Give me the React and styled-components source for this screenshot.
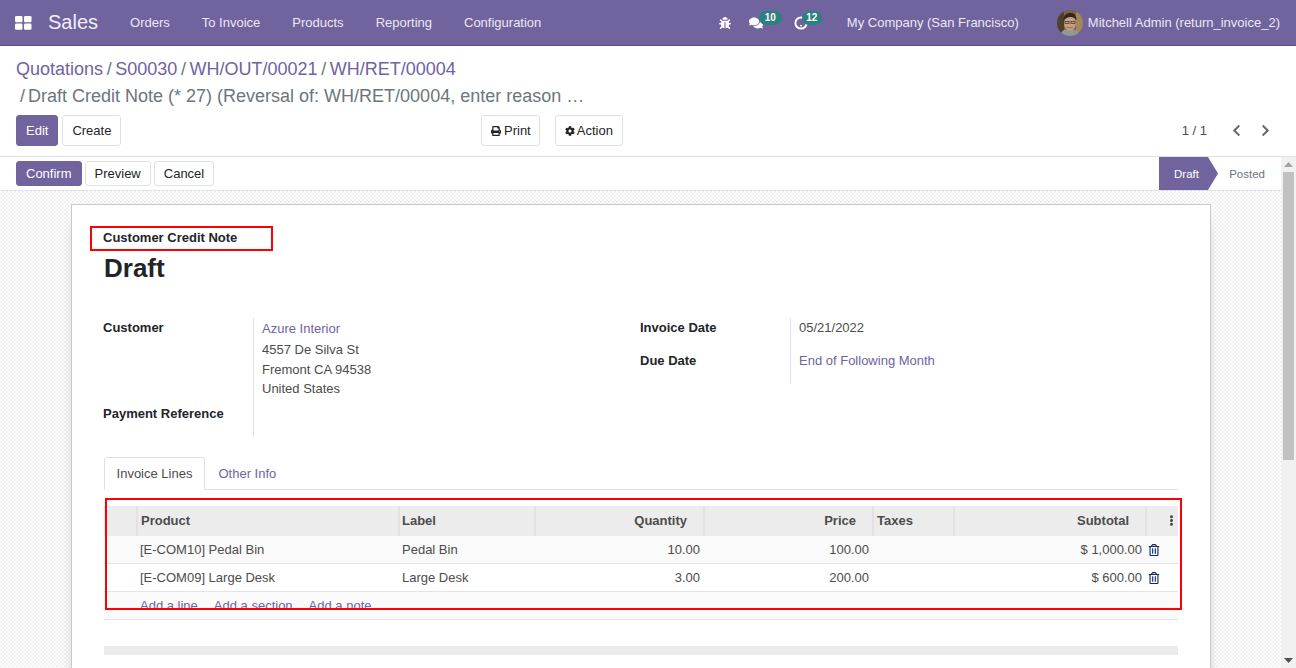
import React from "react";
import styled, { createGlobalStyle } from "styled-components";
import { FaBug, FaComments, FaPrint, FaCog, FaChevronLeft, FaChevronRight, FaRegTrashAlt, FaEllipsisV } from "react-icons/fa";

const Global = createGlobalStyle`
  html, body { margin: 0; padding: 0; height: 100%; overflow: hidden; }
  body { font-family: "Liberation Sans", Arial, sans-serif; font-size: 13px; color: #4c4c4c; background: #fff; }
  * { box-sizing: border-box; }
`;

const Page = styled.div`
  width: 1296px; height: 668px; display: flex; flex-direction: column; overflow: hidden;
`;
const Nav = styled.header`
  flex: 0 0 46px; display: flex; align-items: center; background: #71639e;
  border-bottom: 1px solid #5b4f7f; color: #fff; padding-right: 16px;
`;
const Apps = styled.svg`
  width: 17px; height: 14px; margin-left: 15px; fill: #fff;
`;
const Brand = styled.span`
  font-size: 20px; margin-left: 16px; margin-right: 16px; color: #f0eef6;
`;
const NavItem = styled.span`
  font-size: 13px; padding: 0 16px; color: #ebe8f2; white-space: nowrap;
`;
const Spacer = styled.div` flex: 1; `;
const IconWrap = styled.span`
  position: relative; display: inline-flex; width: 16px; justify-content: center; font-size: ${p => p.$size ?? 14}px; color: #fff;
  margin-left: ${p => p.$ml}px;
`;
const Badge = styled.span`
  position: absolute; top: -5px; left: ${p => p.$l}px; height: 14px; width: ${p => p.$w}px;
  border-radius: 7px; background: #2d8080; color: #fff; font-size: 10px; font-weight: 700; line-height: 14px; text-align: center;
`;
const ClockIcon = styled.svg` width: 14px; height: 14px; fill: none; stroke: #fff; `;
const Company = styled(NavItem)` margin-left: 38px; padding: 0; `;
const Avatar = styled.svg`
  width: 26px; height: 26px; border-radius: 50%; margin-left: 38px; margin-right: 5px;
`;
const User = styled(NavItem)` padding: 0; `;

const Panel = styled.section`
  flex: 0 0 111px; padding: 13px 16px 0; background: #fff; border-bottom: 1px solid #dee2e6;
`;
const Crumbs = styled.div`
  font-size: 18px; line-height: 21px; height: 27px; color: #71639e; white-space: nowrap;
`;
const Sep = styled.span` color: #6c757d; padding: 0 3.6px; `;
const CrumbNow = styled.div`
  font-size: 18px; line-height: 21px; height: 27px; padding-left: 4px; color: #6c757d; white-space: nowrap;
`;
const NowSep = styled.span` padding-right: 3px; `;
const Buttons = styled.div`
  display: grid; grid-template-columns: 465px 1fr auto; align-items: center; height: 31px; margin-top: 2px;
`;
const Group = styled.div` display: flex; gap: ${p => p.$gap ?? 4}px; align-items: center; `;
const Btn = styled.button`
  font: inherit; font-size: 13px; height: ${p => p.$h ?? 31}px; padding: 0 ${p => p.$pr ?? 9}px 0 9px; border-radius: 3px; display: inline-flex; align-items: center; gap: ${p => p.$iconGap ?? 3}px;
  border: 1px solid ${p => p.$primary ? "#71639e" : "#dee2e6"};
  background: ${p => p.$primary ? "#71639e" : "#fff"};
  color: ${p => p.$primary ? "#fff" : "#212529"};
  white-space: nowrap;
  svg { font-size: 10px; }
`;
const Pager = styled.div`
  display: flex; align-items: center; color: #4c4c4c; font-size: 13px; margin-right: 8px;
  svg { color: #666; font-size: 13px; }
`;
const PagerText = styled.span` margin-right: 23px; `;
const PagerNext = styled.span` display: inline-flex; margin-left: 16px; `;

const Body = styled.div` flex: 1; min-height: 0; display: flex; `;
const Main = styled.div` flex: 1; min-width: 0; display: flex; flex-direction: column; `;
const StatusRow = styled.div`
  flex: 0 0 34px; display: flex; align-items: center; justify-content: space-between; padding-left: 16px;
  background: #fff; border-bottom: 1px solid #dee2e6;
`;
const Status = styled.div` display: flex; align-self: stretch; align-items: stretch; font-size: 11.5px; `;
const Step = styled.span`
  width: 49px; display: flex; align-items: center; justify-content: center; padding-left: 6px; position: relative;
  background: #71639e; color: #fff;
  &::after {
    content: ""; position: absolute; left: 100%; top: 0; bottom: 0; width: 10px;
    background: #71639e; clip-path: polygon(0 0, 100% 50%, 0 100%);
  }
`;
const StepOff = styled.span`
  width: 73px; display: flex; align-items: center; justify-content: flex-end; padding-right: 16px; color: #6c757d;
`;
const Canvas = styled.div`
  flex: 1; min-height: 0; overflow: hidden; padding: 13px 70px 0 71px;
  background-color: #fff;
  background-image: repeating-conic-gradient(#f1f1f1 0 25%, #ffffff 0 50%);
  background-size: 4px 4px;
`;
const Sheet = styled.div`
  position: relative; width: 1140px; height: 700px; background: #fff; border: 1px solid #c8c8d0; padding: 25px 32px 0;
  box-shadow: 0 5px 20px -15px #000;
`;
const Head = styled.div` margin-left: -1px; `;
const TypeLabel = styled.div`
  font-size: 13px; font-weight: 700; color: #212529; line-height: 16px;
`;
const Title = styled.h1`
  font-size: 26px; line-height: 31px; font-weight: 700; color: #212529; margin: 7px 0 0 1px;
`;
const RedBox = styled.div`
  position: absolute; border: 2px solid #f00; pointer-events: none;
  left: ${p => p.$l}px; top: ${p => p.$t}px; width: ${p => p.$w}px; height: ${p => p.$h}px;
`;
const Fields = styled.div`
  display: grid; grid-template-columns: 537px 1fr; margin-top: 34px;
`;
const FieldGrid = styled.div`
  display: grid; grid-template-columns: 150px 1fr; align-content: start;
`;
const FieldLabel = styled.div`
  font-weight: 700; color: #212529; font-size: 13px; line-height: 16px; padding-top: 2px; height: ${p => p.$h}px;
`;
const FieldValue = styled.div`
  border-left: 1px solid #dee2e6; padding: 0 0 0 8px; height: ${p => p.$h}px; line-height: 19.6px; color: #4c4c4c;
`;
const ValueCol = styled.div`
  grid-row: 1 / span 2; grid-column: 2;
  border-left: 1px solid #dee2e6; padding: 1px 0 0 8px; color: #4c4c4c; height: 119px;
`;
const LabelCol = styled.div` grid-row: ${p => p.$row}; grid-column: 1; `;
const Link = styled.span` color: #71639e; `;
const AddrLine = styled.div` line-height: 19.6px; `;
const AddrLink = styled.div` line-height: 19.6px; margin-bottom: 1.4px; `;
const Tabs = styled.div`
  display: flex; margin-top: 20px; border-bottom: 1px solid #dee2e6; height: 33px;
`;
const TabOn = styled.div`
  width: 101px; height: 33px; display: flex; align-items: center; justify-content: center;
  border: 1px solid #dee2e6; border-bottom-color: #fff; border-radius: 3px 3px 0 0; color: #4c4c4c; background: #fff;
`;
const TabOff = styled.div`
  padding: 0 13.5px; display: flex; align-items: center; color: #71639e; height: 33px;
`;
const Table = styled.table`
  width: 1074px; table-layout: fixed; border-collapse: collapse; margin-top: 16px; font-size: 13px;
`;
const Th = styled.th`
  height: 30px; background: #ececec; color: #4c4c4c; font-weight: 700; padding: 0 ${p => p.$pr ?? 4}px 1px ${p => p.$pl ?? 3}px;
  text-align: ${p => p.$right ? "right" : "left"};
  border-left: ${p => p.$first ? "0" : "2px solid #e2e2e2"};
`;
const Tr = styled.tr`
  background: ${p => p.$alt ? "#fafafa" : "#fff"};
  border-bottom: 1px solid #e4e4e4;
`;
const Td = styled.td`
  height: ${p => p.$h}px; padding: 0 4px 0 ${p => p.$pl ?? 3}px; color: #4c4c4c; white-space: nowrap;
  text-align: ${p => p.$right ? "right" : "left"};
`;
const Trash = styled(FaRegTrashAlt)` color: #0d2a62; font-size: 12px; vertical-align: -2px; `;
const Dots = styled(FaEllipsisV)` color: #4c4c4c; font-size: 11px; vertical-align: -1px; `;
const DotsCell = styled.div` text-align: right; `;
const AddLink = styled.span` color: #71639e; margin-right: 16px; `;
const AddCell = styled(Td)` vertical-align: top; padding-top: 6px; `;
const GreyBar = styled.div` height: 9px; background: #ececec; margin-top: 26px; `;

const ScrollBar = styled.div`
  flex: 0 0 15px; background: #f1f1f1; display: flex; flex-direction: column; align-items: center;
`;
const ScrollArrow = styled.svg` width: 9px; height: 5px; fill: ${p => p.$fill}; margin: ${p => p.$m}; `;
const Thumb = styled.div` width: 11px; height: 288px; background: #c1c1c1; `;
const Gap = styled.div` flex: 1; `;

function AppsIcon() {
  return (
    <Apps viewBox="0 0 17 14">
      <rect x="0" y="0" width="7.5" height="6.2" rx="1.2" />
      <rect x="9" y="0" width="7.5" height="6.2" rx="1.2" />
      <rect x="0" y="7.6" width="7.5" height="6.2" rx="1.2" />
      <rect x="9" y="7.6" width="7.5" height="6.2" rx="1.2" />
    </Apps>
  );
}

function Face() {
  return (
    <Avatar viewBox="0 0 26 26">
      <rect width="26" height="26" fill="#7d6242" />
      <rect x="0" y="0" width="7" height="26" fill="#4e3f30" />
      <rect x="19" y="2" width="7" height="20" fill="#a3865a" />
      <path d="M3 26c1-6 5-7 10-7s9 2 10 7z" fill="#8f9a96" />
      <ellipse cx="13" cy="13" rx="6" ry="7.5" fill="#c99e82" />
      <path d="M6.5 11c0-6 3-8 7-8s6 3 6 7c-2-2-3-3-6-3s-5 1-7 4z" fill="#2e2620" />
      <rect x="8" y="11.5" width="4" height="2" fill="none" stroke="#3a3028" strokeWidth=".7" />
      <rect x="14" y="11.5" width="4" height="2" fill="none" stroke="#3a3028" strokeWidth=".7" />
      <path d="M10 17c2 1 4 1 6 0" stroke="#8a5a48" strokeWidth=".8" fill="none" />
    </Avatar>
  );
}

const rows = [
  { p: "[E-COM10] Pedal Bin", l: "Pedal Bin", q: "10.00", r: "100.00", s: "$ 1,000.00", alt: true, h: 27 },
  { p: "[E-COM09] Large Desk", l: "Large Desk", q: "3.00", r: "200.00", s: "$ 600.00", alt: false, h: 28 },
];

export default function App() {
  return (
    <Page>
      <Global />
      <Nav>
        <AppsIcon />
        <Brand>Sales</Brand>
        <NavItem>Orders</NavItem>
        <NavItem>To Invoice</NavItem>
        <NavItem>Products</NavItem>
        <NavItem>Reporting</NavItem>
        <NavItem>Configuration</NavItem>
        <Spacer />
        <IconWrap $ml={0} $size={12}><FaBug /></IconWrap>
        <IconWrap $ml={15}><FaComments /><Badge $l={11} $w={23}>10</Badge></IconWrap>
        <IconWrap $ml={29}>
          <ClockIcon viewBox="0 0 14 14">
            <circle cx="7" cy="7" r="5.6" strokeWidth="2" />
            <path d="M6 9.6h2" strokeWidth="1.2" />
          </ClockIcon>
          <Badge $l={9} $w={20}>12</Badge>
        </IconWrap>
        <Company>My Company (San Francisco)</Company>
        <Face />
        <User>Mitchell Admin (return_invoice_2)</User>
      </Nav>
      <Panel>
        <Crumbs>
          <Link>Quotations</Link><Sep>/</Sep><Link>S00030</Link><Sep>/</Sep><Link>WH/OUT/00021</Link><Sep>/</Sep><Link>WH/RET/00004</Link>
        </Crumbs>
        <CrumbNow><NowSep>/</NowSep>Draft Credit Note (* 27) (Reversal of: WH/RET/00004, enter reason …</CrumbNow>
        <Buttons>
          <Group>
            <Btn $primary>Edit</Btn>
            <Btn>Create</Btn>
          </Group>
          <Group $gap={15}>
            <Btn $iconGap={3} $pr={8}><FaPrint />Print</Btn>
            <Btn $iconGap={2}><FaCog />Action</Btn>
          </Group>
          <Pager>
            <PagerText>1 / 1</PagerText>
            <FaChevronLeft />
            <PagerNext><FaChevronRight /></PagerNext>
          </Pager>
        </Buttons>
      </Panel>
      <Body>
        <Main>
          <StatusRow>
            <Group $gap={3}>
              <Btn $primary $h={25}>Confirm</Btn>
              <Btn $h={25}>Preview</Btn>
              <Btn $h={25}>Cancel</Btn>
            </Group>
            <Status>
              <Step>Draft</Step>
              <StepOff>Posted</StepOff>
            </Status>
          </StatusRow>
          <Canvas>
            <Sheet>
              <RedBox $l={18} $t={21} $w={183} $h={25} />
              <RedBox $l={33} $t={293} $w={1077} $h={112} />
              <Head>
                <TypeLabel>Customer Credit Note</TypeLabel>
                <Title>Draft</Title>
                <Fields>
                  <FieldGrid>
                    <LabelCol $row={1}><FieldLabel $h={86}>Customer</FieldLabel></LabelCol>
                    <LabelCol $row={2}><FieldLabel $h={33}>Payment Reference</FieldLabel></LabelCol>
                    <ValueCol>
                      <AddrLink><Link>Azure Interior</Link></AddrLink>
                      <AddrLine>4557 De Silva St</AddrLine>
                      <AddrLine>Fremont CA 94538</AddrLine>
                      <AddrLine>United States</AddrLine>
                    </ValueCol>
                  </FieldGrid>
                  <FieldGrid>
                    <FieldLabel $h={33}>Invoice Date</FieldLabel>
                    <FieldValue $h={33}>05/21/2022</FieldValue>
                    <FieldLabel $h={33}>Due Date</FieldLabel>
                    <FieldValue $h={33}><Link>End of Following Month</Link></FieldValue>
                  </FieldGrid>
                </Fields>
              </Head>
              <Tabs>
                <TabOn>Invoice Lines</TabOn>
                <TabOff>Other Info</TabOff>
              </Tabs>
              <Table>
                <colgroup>
                  <col width="33" /><col width="262" /><col width="136" /><col width="169" /><col width="169" /><col width="81" /><col width="192" /><col width="32" />
                </colgroup>
                <thead>
                  <tr>
                    <Th $first />
                    <Th>Product</Th>
                    <Th $pl={2}>Label</Th>
                    <Th $right $pr={16}>Quantity</Th>
                    <Th $right $pr={16}>Price</Th>
                    <Th>Taxes</Th>
                    <Th $right $pr={16}>Subtotal</Th>
                    <Th $pr={1}><DotsCell><Dots /></DotsCell></Th>
                  </tr>
                </thead>
                <tbody>
                  {rows.map(r => (
                    <Tr key={r.p} $alt={r.alt}>
                      <Td $h={r.h} />
                      <Td $h={r.h}>{r.p}</Td>
                      <Td $h={r.h}>{r.l}</Td>
                      <Td $h={r.h} $right>{r.q}</Td>
                      <Td $h={r.h} $right>{r.r}</Td>
                      <Td $h={r.h} />
                      <Td $h={r.h} $right>{r.s}</Td>
                      <Td $h={r.h} $pl={2}><Trash /></Td>
                    </Tr>
                  ))}
                  <Tr $alt>
                    <Td $h={28} />
                    <AddCell $h={28} colSpan={7}>
                      <AddLink>Add a line</AddLink><AddLink>Add a section</AddLink><AddLink>Add a note</AddLink>
                    </AddCell>
                  </Tr>
                </tbody>
              </Table>
              <GreyBar />
            </Sheet>
          </Canvas>
        </Main>
        <ScrollBar>
          <ScrollArrow $fill="#a3a3a3" $m="5px 0 5px" viewBox="0 0 9 5"><path d="M4.5 0 9 5H0z" /></ScrollArrow>
          <Thumb />
          <Gap />
          <ScrollArrow $fill="#505050" $m="0 0 5px" viewBox="0 0 9 5"><path d="M0 0h9L4.5 5z" /></ScrollArrow>
        </ScrollBar>
      </Body>
    </Page>
  );
}
